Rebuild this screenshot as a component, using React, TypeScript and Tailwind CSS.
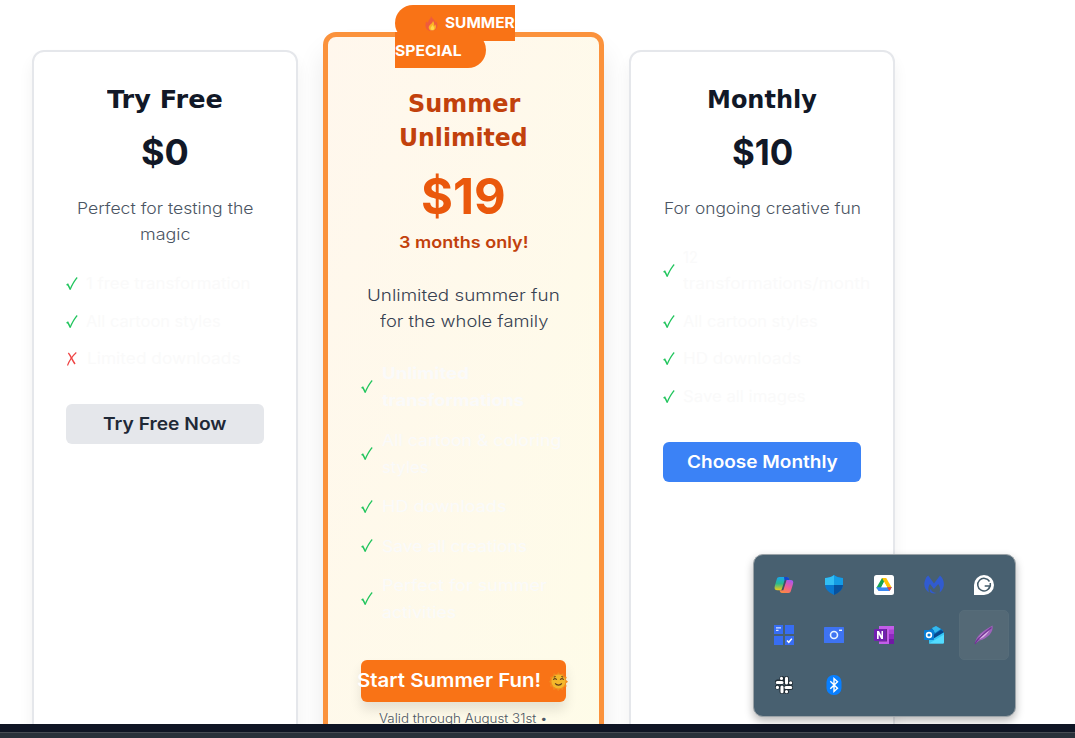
import { useLayoutEffect, useRef, type ReactNode } from "react";

/** One line of text stretched horizontally to fill the width of its box. */
function Fit({ className, children }: { className: string; children: ReactNode }) {
  const box = useRef<HTMLSpanElement>(null);
  const text = useRef<HTMLSpanElement>(null);
  useLayoutEffect(() => {
    if (box.current && text.current) {
      const ratio = box.current.clientWidth / text.current.offsetWidth;
      text.current.style.transform = `scaleX(${ratio})`;
    }
  }, []);
  return (
    <span ref={box} className={`block shrink-0 whitespace-nowrap text-left ${className}`}>
      <span ref={text} className="inline-block origin-left">
        {children}
      </span>
    </span>
  );
}

function Check() {
  return (
    <svg viewBox="0 0 12 14" className="h-3.5 w-3 shrink-0" fill="none" stroke="#22c55e">
      <path d="M.6 8.2 1.8 7.400 4.200 12.200" strokeWidth="1.500" />
      <path d="M4 12.700C6 8 8.200 3.800 11.200.5" strokeWidth="1.200" />
    </svg>
  );
}

function Cross() {
  return (
    <svg viewBox="0 0 12 14" className="h-3.5 w-3 shrink-0" fill="none" stroke="#ef4444">
      <path d="M2.300 1C4 2.500 6.200 8 9 12" strokeWidth="1.500" />
      <path d="M10.300.5C6.500 4 3.500 8 1.500 13.500" strokeWidth="1.100" />
    </svg>
  );
}

type Row = { lines: [string, string][]; no?: boolean };

function Features({ rows, big }: { rows: Row[]; big?: boolean }) {
  return (
    <ul className={`flex flex-col text-[#fafafa] ${big ? "gap-[12.5px] text-[16.3px] leading-[27px]" : "gap-[11.5px] text-[15.5px] leading-[26px]"}`}>
      {rows.map((row, i) => (
        <li key={i} className={`flex items-center ${big ? "gap-[9px]" : "gap-2"}`}>
          {row.no ? <Cross /> : <Check />}
          <div className={row.no ? "pl-px" : ""}>
            {row.lines.map(([t, w]) => (
              <Fit key={t} className={w}>{t}</Fit>
            ))}
          </div>
        </li>
      ))}
    </ul>
  );
}

const heading = "font-['DejaVu_Sans'] font-bold";

function Flame() {
  return (
    <svg viewBox="0 0 14 17" className="h-[17px] w-3.5 shrink-0">
      <path d="M7 1C8 4 11 4.5 11.5 8l1-1.5C15 12 12 16 7.4 16 2 16 .2 11 2.3 6.5L4 8C4 5 7 4 7 1Z" fill="#ef5b3c" />
      <path d="M9 6c-.4 3-5 4-4.2 7.3.4 1.7 1.5 2.3 3.1 2.3 4 0 4.6-4 3.5-6.2L10.2 11C10.5 9 10 7 9 6Z" fill="#fbb324" />
      <path d="M8.5 10c-1 2-2.4 2.6-1.7 4.3.5 1 3 1 3.4-.6.3-1.2-.7-2.4-1.7-3.7Z" fill="#ffd94a" />
    </svg>
  );
}

function Sun() {
  return (
    <svg viewBox="0 0 20 20" className="size-[19px] shrink-0">
      <path d="m10 0 2 2.4 3-1 .6 3 3.1.8-1 3 2.3 2-2.3 2 .9 3.1-3.1.6-.8 3-3-.9-2 2-2-2-3 .9-.8-3-3-.8 1-3-2-1.900 2-2-.8-3 3-.8.8-3 3 .9Z" fill="#f28a1e" />
      <circle cx="10" cy="10" r="7.400" fill="#f3b72b" />
      <path d="M4.500 8.300c.7-1.800 3-1.800 3.600 0M11.800 8.300c.7-1.800 3-1.800 3.600 0M6.500 12c1.500 2.400 5.500 2.400 7 0M5 5.600l2-1M15 5.600l-2-1" fill="none" stroke="#5b3a1b" strokeWidth="1.100" />
    </svg>
  );
}

const trayIcons: ReactNode[] = [
  <>
    <defs>
      <linearGradient id="cpA" x1="0" y1="0" x2="0" y2="1">
        <stop stopColor="#18a7ee" /><stop offset=".5" stopColor="#2bb98c" /><stop offset="1" stopColor="#f3cb16" />
      </linearGradient>
      <linearGradient id="cpB" x1=".7" y1="0" x2=".3" y2="1">
        <stop stopColor="#a957ee" /><stop offset=".5" stopColor="#f05d96" /><stop offset="1" stopColor="#fb8a40" />
      </linearGradient>
    </defs>
    <path d="M5.500 2H13c1.500 0 2 1 2.400 3H13c-1.500 0-2 1-2.400 2.300L8.800 13c-.5 1.600-1 2.300-2.600 2.300H3.500C1 15.300 0 14 .8 11l1.900-6.500C3.200 2.700 4 2 5.500 2Z" fill="url(#cpA)" />
    <path d="M10 2h3c1.500 0 2 1 2.400 3H13c-1.400 0-2 .8-2.300 2Z" fill="#1745c9" />
    <path d="M14.500 18H8c-1.500 0-2-1-2.400-2.700H7c1 0 1.500-.7 2-2.300l1.800-6C11.300 5.500 12 5 13 5h3.500c2.500 0 3.300 1.500 2.500 4l-2 6.500c-.5 1.800-1.200 2.500-2.500 2.500Z" fill="url(#cpB)" />
    <path d="m10.200 6.500-2 6.500c-.4 1.500-.8 2.300-1.500 2.300h2.600l2.900-9 .4-1.300c-1.300 0-2 .4-2.400 1.500Z" fill="#3f5160" />
  </>,
  <>
    <path d="M10 0c3 2.300 6 3 9 3v6c0 5-3 8-9 11C4 17 1 14 1 9V3c3 0 6-.7 9-3Z" fill="#0978d0" />
    <path d="M10 0v10H1V3c3 0 6-.7 9-3Z" fill="#32bff4" />
    <path d="M10 0v10h9V3c-3 0-6-.7-9-3Z" fill="#149be4" />
    <path d="M10 10h9c-.5 4.300-3.500 7.500-9 10Z" fill="#07529f" />
  </>,
  <>
    <rect width="20" height="20" rx="2.500" fill="#fff" />
    <path d="M8 3h4.200L5.500 16 2.300 13Z" fill="#16a453" />
    <path d="M8 3h4.200L18 13h-4.500Z" fill="#ffc107" />
    <path d="M2.300 12.300h15.500L15.500 16H4.500Z" fill="#3988f4" />
    <path d="M13 12.300h4.800L15.500 16Z" fill="#e9423b" />
    <path d="m10 7 3 5.300H7.200Z" fill="#fff" />
  </>,
  <path d="M4.200.5 10 8.500 16 .5c4 3.500 5.300 9.500 2 14.500-.7 1-1.600 2-2.500 2.500 1-2.800.6-6-1.300-8.500L9.900 14 6 9c-1.800 2-2.100 5.500-1 8.500C.7 15.300-.7 9.500 1 5.500c.7-2.300 1.500-3.800 3.200-5ZM5.700 16.500c1.500 2 4.300 2.500 7 1.500-2.700-.3-5-1-6-4.500Z" fill="#315bd0" />,
  <>
    <path d="M0 20V10A10 10 0 1 1 10 20Z" fill="#fff" />
    <path d="M15.500 6.500A6.300 6.300 0 1 0 16.200 11H10.700M16.300 8v3L14 14.500" fill="none" stroke="#435b69" strokeWidth="1.500" />
  </>,
  <>
    <path d="M0 0h9v9H0ZM11 0h9v9h-9ZM0 11h9v9H0ZM11 11h9v9h-9Z" fill="#376df2" />
    <path d="M2 2.800h5M2 5.300h2.500" stroke="#d7e5ff" strokeWidth="1.300" />
    <path d="m13 15.500 1.800 1.800 3-3.700" fill="none" stroke="#fff" strokeWidth="1.500" />
  </>,
  <>
    <rect y="2" width="20" height="16" rx=".6" fill="#3e73f2" />
    <circle cx="10" cy="10" r="3.500" fill="none" stroke="#eaf4ff" strokeWidth="1.600" />
    <path d="M15 5.300h3" stroke="#e5f2ff" strokeWidth="1.400" />
  </>,
  <>
    <path d="M5 1h15v18H5Z" fill="#c35de9" />
    <path d="M15 4.500h5V9h-5Z" fill="#ac42d5" /><path d="M15 9h5v5h-5Z" fill="#8d2abf" /><path d="M15 14h5v5h-5Z" fill="#7118a5" />
    <path d="M5 4h8v12.500H5Z" fill="#35104f" opacity=".65" />
    <rect y="4" width="12" height="12" rx=".8" fill="#7221af" />
    <path d="M3 14V6h2l2.500 4.700V6H9v8H7.200L4.700 9.300V14Z" fill="#fff" />
  </>,
  <>
    <path d="m5 5 7-4 7 4v8H5Z" fill="#0871bf" /><path d="m8 3 4-2 5 3-6 4Z" fill="#35b8ec" />
    <path d="M5 12 20 7v10c0 1-.5 1.500-1.500 1.500H5Z" fill="#35c5f4" />
    <path d="m8 11 9-6 3 2.200-10 6Z" fill="#07488f" />
    <path d="m5 18.500 15-9V17c0 1-.5 1.500-1.500 1.500Z" fill="#53dcff" />
    <rect y="5" width="10" height="10" rx=".8" fill="#087dd5" />
    <circle cx="5" cy="10" r="2.400" fill="none" stroke="#fff" strokeWidth="1.600" />
  </>,
  <>
    <path d="M1 19C2 10 9 6 18.500.5 20 7 13 14 5.500 15.500Z" fill="#9d62ba" />
    <path d="M4 14C7 8 12 7 16 4c-2 4-5 8-10 10Z" fill="#d9b5e4" />
    <path d="M1 19C4 12 10 9 17.500 2.500" fill="none" stroke="#713494" strokeWidth="1.300" />
  </>,
  <>
    <g fill="none" strokeLinecap="round">
      <path d="M8 3.500v0M8 7H3.500M12.500 3.500V8M16.500 8v0M12 12.500h4.500M12.500 16.500v0M8 12v4.500M3.500 12v0" stroke="#202b33" strokeWidth="5" />
      <path d="M7.500 3.300v.2M8 7.500H3.300M12.500 3.300V8M16.600 7.700h.1M12 12.500h4.700M12.500 16.600v.1M8 12v4.700M3.300 12.400h.2" stroke="#fff" strokeWidth="3.100" />
    </g>
  </>,
  <>
    <rect x="2.500" width="15" height="20" rx="7" fill="#087fff" />
    <path d="m6.300 6.300 7.200 7L10 16.500v-13l3.500 3.200-7.200 7" fill="none" stroke="#fff" strokeWidth="1.400" />
  </>,
];

function Tray() {
  return (
    <div className="absolute left-[753px] top-[554px] grid grid-cols-[repeat(5,50px)] grid-rows-[repeat(3,50px)] rounded-[10px] border border-[#9ba3a8] bg-[#486070] pb-1.5 pl-[5px] pr-1.5 pt-[5px] shadow-[0_4px_8px_rgba(0,0,0,0.28)]">
      {trayIcons.map((icon, i) => (
        <div key={i} className={`flex items-center justify-center rounded-[5px] ${i === 9 ? "border border-[#566c79] bg-[#546976]" : ""}`}>
          <svg viewBox="0 0 20 20" className="size-5">{icon}</svg>
        </div>
      ))}
    </div>
  );
}

const sideCard =
  "mt-[50px] flex h-[760px] w-[266px] shrink-0 flex-col rounded-xl border-2 border-[#e5e7eb] bg-white px-8 pt-8 shadow-[0_10px_15px_rgba(0,0,0,0.06)]";

export default function App() {
  return (
    <div className="relative flex h-[738px] w-[1075px] flex-col overflow-hidden bg-white font-['Inter',sans-serif]">
      <main className="flex h-[724px] shrink-0 items-start gap-[25px] overflow-hidden pl-8">
        <section className={sideCard}>
          <h3 className={`flex justify-center text-2xl leading-8 text-[#111827] ${heading}`}>
            <Fit className="w-[116px]">Try Free</Fit>
          </h3>
          <div className="mt-4 flex justify-center text-[36px] font-bold leading-10 text-[#111827]">
            <Fit className="w-[48px]">$0</Fit>
          </div>
          <p className="mt-6 flex flex-col items-center text-[15.5px] font-light leading-[26px] text-[#4b5563]">
            <Fit className="w-[176px]">Perfect for testing the</Fit>
            <Fit className="w-[51px]">magic</Fit>
          </p>
          <div className="mt-[23px]">
            <Features rows={[
              { lines: [["1 free transformation", "w-[165px]"]] },
              { lines: [["All cartoon styles", "w-[135px]"]] },
              { lines: [["Limited downloads", "w-[154px]"]], no: true },
            ]} />
          </div>
          <button className="mt-8 flex h-10 shrink-0 items-center justify-center rounded-md bg-[#e5e7eb] pr-0.5 text-[17.5px] font-semibold text-[#1f2937]">
            <Fit className="w-[123px]">Try Free Now</Fit>
          </button>
        </section>

        <section className="relative mt-8 flex h-[800px] w-[281px] shrink-0 flex-col rounded-[13px] border-[5px] border-[#fb923c] bg-[linear-gradient(110deg,#fff7ed,#fefce8)] bg-origin-border px-[33px] pt-[50px] shadow-[0_20px_28px_rgba(0,0,0,0.09)]">
          <div className="absolute -top-8 left-[67px] w-[120px] text-[15px] font-bold leading-9 text-white">
            <div className="flex h-9 items-center rounded-l-[18px] bg-[#f97316] pl-[29px]">
              <Flame />
              <Fit className="ml-[7px] w-[70px]">SUMMER</Fit>
            </div>
            <div className="-mt-[9px] h-9 w-[91px] rounded-r-[18px] bg-[#f97316] pt-px">
              <Fit className="w-[67px]">SPECIAL</Fit>
            </div>
          </div>
          <h3 className={`flex flex-col items-center text-[25px] leading-[34px] text-[#c2410c] ${heading}`}>
            <Fit className="w-[112px]">Summer</Fit>
            <Fit className="w-[129px]">Unlimited</Fit>
          </h3>
          <div className="mt-[13px] flex justify-center text-[50px] font-bold leading-[56px] text-[#ea580c]">
            <Fit className="w-[85px]">$19</Fit>
          </div>
          <div className="mt-[5px] flex justify-center text-[16.5px] font-semibold leading-[26px] text-[#c2410c]">
            <Fit className="w-[129px]">3 months only!</Fit>
          </div>
          <p className="mt-[27px] flex flex-col items-center text-[16.3px] font-light leading-[26px] text-[#374151]">
            <Fit className="w-[193px]">Unlimited summer fun</Fit>
            <Fit className="w-[168px]">for the whole family</Fit>
          </p>
          <div className="mt-[26px]">
            <Features big rows={[
              { lines: [["Unlimited", "w-[87px] font-bold"], ["transformations", "w-[142px] font-bold"]] },
              { lines: [["All cartoon & coloring", "w-[179px]"], ["styles", "w-[47px]"]] },
              { lines: [["HD downloads", "w-[124px]"]] },
              { lines: [["Save all creations", "w-[145px]"]] },
              { lines: [["Perfect for summer", "w-[165px]"], ["activities", "w-[74px]"]] },
            ]} />
          </div>
          <button className="mt-[34px] flex h-[42px] shrink-0 items-center justify-center whitespace-nowrap rounded-md bg-[#f97316] pr-[3px] text-[19px] font-semibold text-white shadow-[0_8px_12px_rgba(0,0,0,0.1)]">
            <Fit className="w-[184px]">Start Summer Fun!</Fit>
            <span className="ml-2"><Sun /></span>
          </button>
          <div className="mt-[7px] flex justify-center pr-px text-[12.5px] font-light leading-5 text-[#4b5563]">
            <Fit className="w-[169px]">Valid through August 31st •</Fit>
          </div>
        </section>

        <section className={sideCard}>
          <h3 className={`flex justify-center text-2xl leading-8 text-[#111827] ${heading}`}>
            <Fit className="w-[110px]">Monthly</Fit>
          </h3>
          <div className="mt-4 flex justify-center text-[36px] font-bold leading-10 text-[#111827]">
            <Fit className="w-[61px]">$10</Fit>
          </div>
          <p className="mt-6 flex justify-center text-[15.5px] font-light leading-[26px] text-[#4b5563]">
            <Fit className="w-[197px]">For ongoing creative fun</Fit>
          </p>
          <div className="mt-[23px]">
            <Features rows={[
              { lines: [["12", "w-[15px]"], ["transformations/month", "w-[187px]"]] },
              { lines: [["All cartoon styles", "w-[135px]"]] },
              { lines: [["HD downloads", "w-[118px]"]] },
              { lines: [["Save all images", "w-[123px]"]] },
            ]} />
          </div>
          <button className="mt-[32.5px] flex h-10 shrink-0 items-center justify-center rounded-md bg-[#3b82f6] text-[17.5px] font-semibold text-white">
            <Fit className="w-[151px]">Choose Monthly</Fit>
          </button>
        </section>
      </main>
      <footer className="h-[14px] shrink-0 bg-[#0f1524] pt-2">
        <div className="h-1.5 border-t border-[#484d54] bg-[#29313a]" />
      </footer>
      <Tray />
    </div>
  );
}
